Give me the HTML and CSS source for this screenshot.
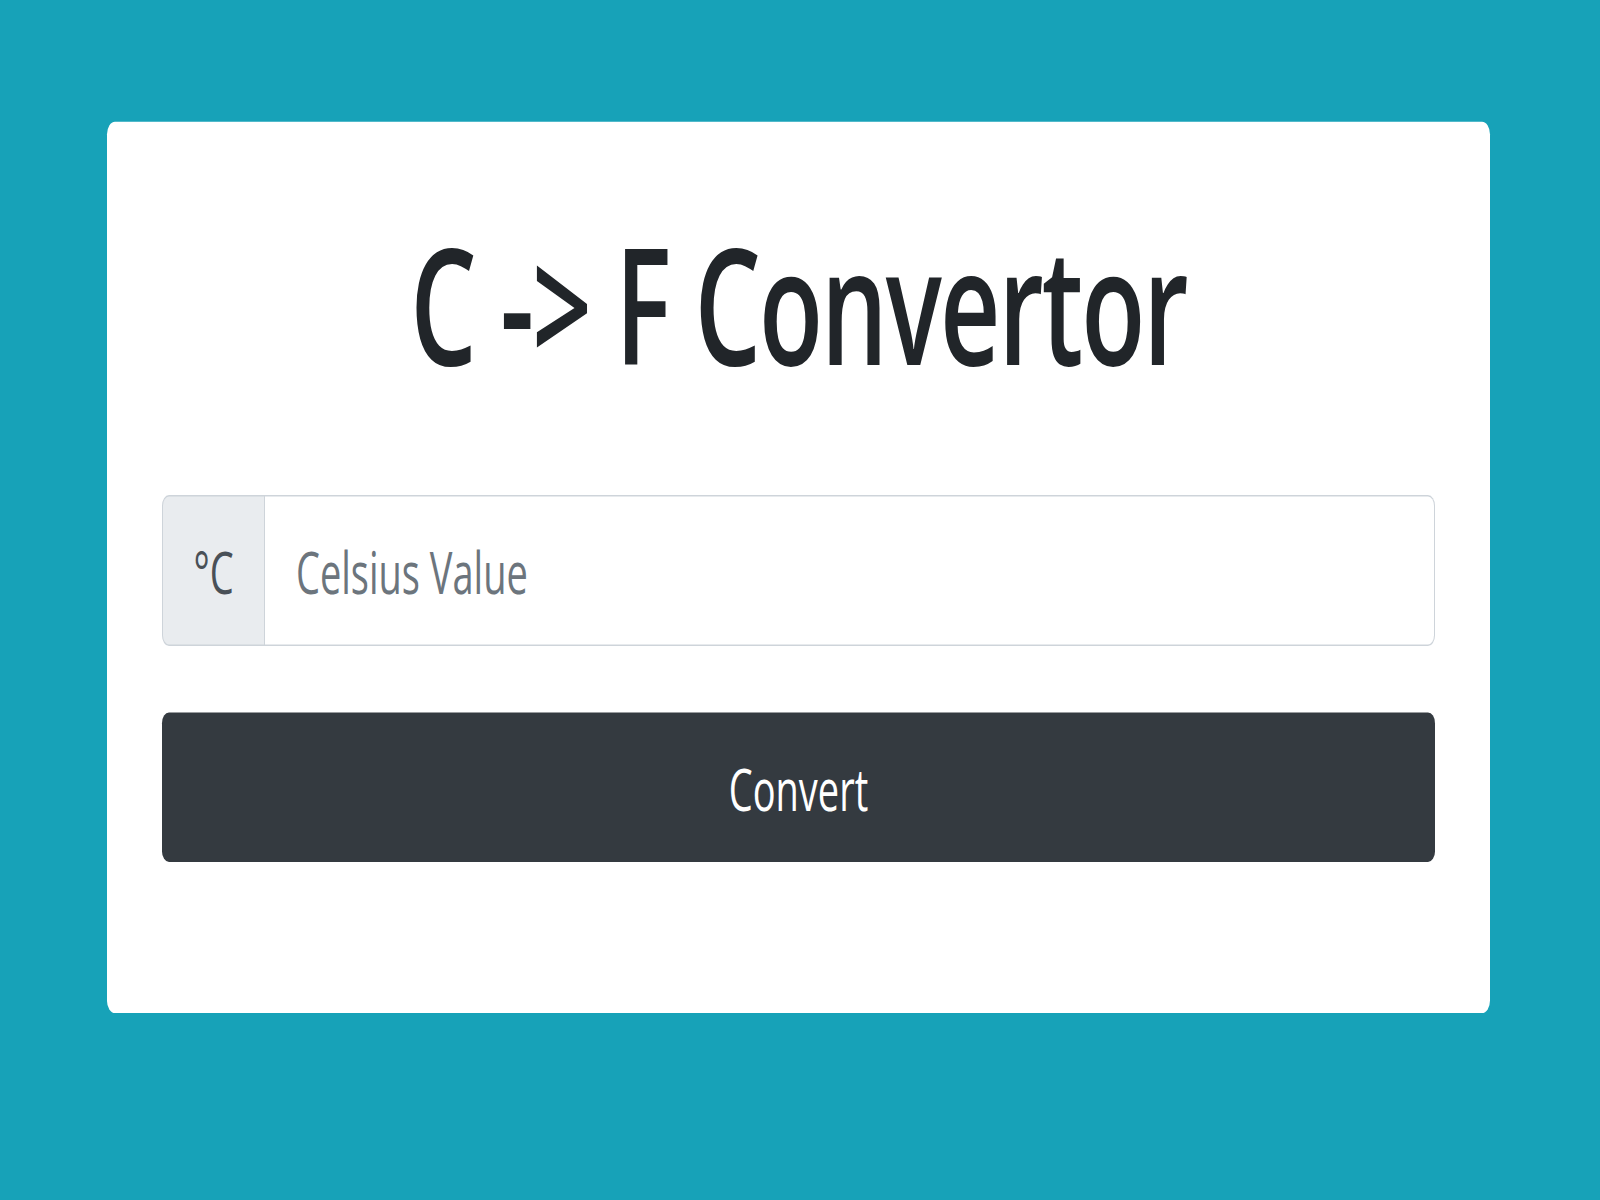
FILE: index.html
```html
<!DOCTYPE html>
<html lang="en">
<head>
<meta charset="utf-8">
<title>C -> F Convertor</title>
<link rel="stylesheet" href="styles.css">
</head>
<body>
<div class="stage">
  <main class="card">
    <h1 class="title">C -&gt; F Convertor</h1>
    <div class="input-group">
      <span class="addon">°C</span>
      <input class="field" type="text" placeholder="Celsius Value">
    </div>
    <button class="btn" type="button">Convert</button>
  </main>
</div>
</body>
</html>
```
FILE: styles.css
```css
html, body {
  margin: 0;
  height: 100%;
  background: #17a2b8;
  overflow: hidden;
}

body {
  font-family: "Open Sans", "Noto Sans", sans-serif;
}

.stage {
  width: 1600px;
  box-sizing: border-box;
  padding: 79px 110px 0 107px;
  transform: scaleY(1.542);
  transform-origin: 0 0;
}

.card {
  background: #fff;
  border-radius: 8px;
  padding: 55px 55px 98px;
}

.title {
  margin: 0 0 61px;
  font-size: 105px;
  line-height: 126px;
  font-weight: 600;
  letter-spacing: -2px;
  text-align: center;
  color: #212529;
}

.input-group {
  display: flex;
  height: 98px;
}

.addon {
  box-sizing: border-box;
  width: 103px;
  display: flex;
  align-items: center;
  justify-content: center;
  background: #e9ecef;
  border: 1px solid #ced4da;
  border-radius: 7px 0 0 7px;
  font-size: 38px;
  color: #495057;
}

.field {
  flex: 1;
  min-width: 0;
  box-sizing: border-box;
  border: 1px solid #ced4da;
  border-left: 0;
  border-radius: 0 7px 7px 0;
  padding: 0 31px;
  font-family: inherit;
  font-size: 38px;
  color: #495057;
  background: #fff;
  outline: none;
}

.field::placeholder {
  color: #6c757d;
  opacity: 1;
}

.btn {
  display: block;
  width: 100%;
  margin-top: 43px;
  height: 97px;
  background: #343a40;
  color: #fff;
  border: 0;
  border-radius: 7px;
  font-family: inherit;
  font-size: 38px;
  cursor: pointer;
}
```
